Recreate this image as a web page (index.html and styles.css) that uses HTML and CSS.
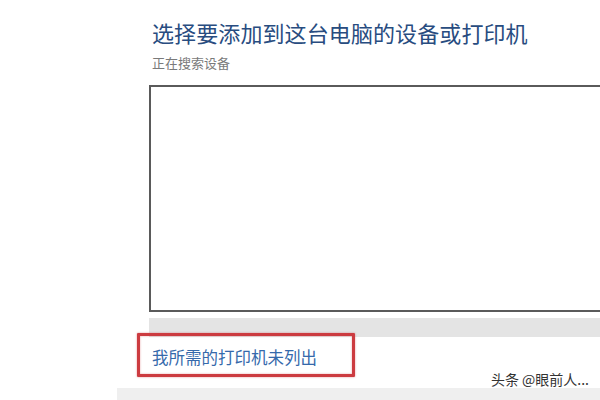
FILE: index.html
```html
<!DOCTYPE html>
<html lang="zh-CN">
<head>
    <meta charset="UTF-8">
    <title>添加设备</title>
    <link rel="stylesheet" href="styles.css">
</head>
<body>
    <div class="dialog">
        <div class="dialog-body">
            <h1 class="title">选择要添加到这台电脑的设备或打印机</h1>
            <div class="subtitle">正在搜索设备</div>
            <div class="device-list"></div>
            <div class="list-scroll"></div>
            <div class="link-row">
                <a class="not-listed" href="#">我所需的打印机未列出</a>
                <span class="highlight"></span>
            </div>
        </div>
        <div class="dialog-footer"></div>
    </div>
    <div class="watermark">头条 @眼前人...</div>
</body>
</html>
```

FILE: styles.css
```css
/* Reset */
* {
    margin: 0;
    padding: 0;
    box-sizing: border-box;
}

body {
    font-family: "Microsoft YaHei", "Noto Sans CJK SC", sans-serif;
    background-color: #ffffff;
    width: 600px;
    height: 400px;
    overflow: hidden;
    position: relative;
}

/* Dialog */
.dialog {
    margin-left: 117px;
    height: 400px;
    display: flex;
    flex-direction: column;
}

.dialog-body {
    flex: 1;
    padding: 17px 0 0 35px;
    display: flex;
    flex-direction: column;
}

.title {
    font-size: 22px;
    font-weight: normal;
    line-height: 30px;
    color: #284c80;
    letter-spacing: 0.1px;
}

.subtitle {
    margin-top: 7px;
    font-size: 13px;
    line-height: 18px;
    color: #7a7a7a;
}

/* Device list */
.device-list {
    margin-top: 13px;
    margin-left: -3px;
    margin-right: -10px;
    height: 227px;
    border: 2px solid #5a5a5a;
    background-color: #ffffff;
}

.list-scroll {
    margin-top: 6px;
    margin-left: -3px;
    height: 19px;
    background-color: #e4e4e4;
}

/* Link row */
.link-row {
    position: relative;
    height: 40px;
    display: flex;
    align-items: center;
}

.not-listed {
    font-size: 16.5px;
    color: #3569ab;
    text-decoration: none;
}

.highlight {
    position: absolute;
    left: -15px;
    top: -4px;
    width: 218px;
    height: 44px;
    border: 3px solid #cc3b40;
    border-radius: 1px;
    box-shadow: 0 0 2px rgba(204, 59, 64, 0.6), inset 0 0 2px rgba(204, 59, 64, 0.5);
}

.dialog-footer {
    height: 12px;
    background-color: #efefef;
}

/* Watermark */
.watermark {
    position: absolute;
    right: 11px;
    top: 370px;
    font-size: 14px;
    line-height: 18px;
    color: #333333;
}
```
